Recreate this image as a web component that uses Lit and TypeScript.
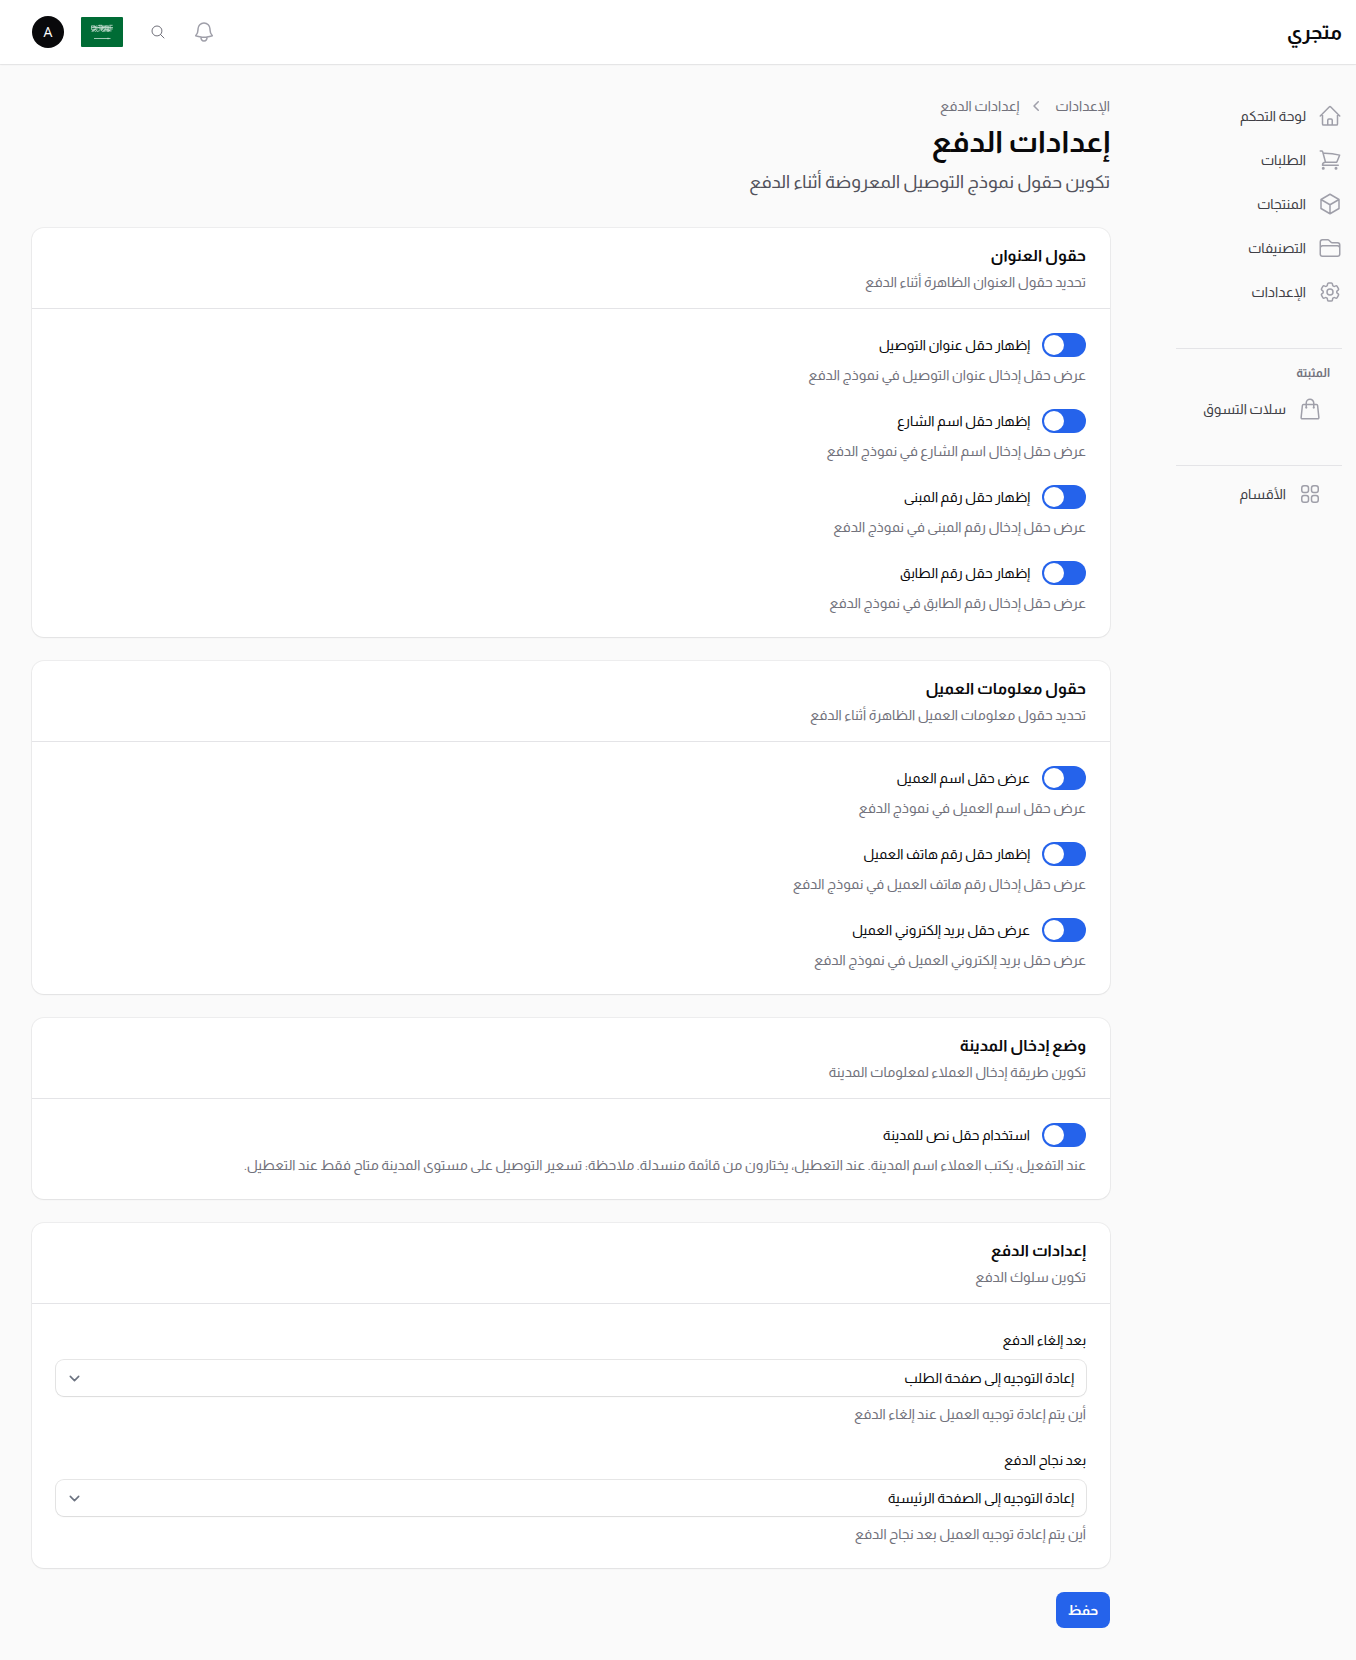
import { LitElement, html, css, svg } from "lit";
import { customElement, property } from "lit/decorators.js";

const ICONS: Record<string, string[]> = {
  home: [
    "m2.25 12 8.954-8.955c.44-.439 1.152-.439 1.591 0L21.75 12M4.5 9.75v10.125c0 .621.504 1.125 1.125 1.125H9.75v-4.875c0-.621.504-1.125 1.125-1.125h2.25c.621 0 1.125.504 1.125 1.125V21h4.125c.621 0 1.125-.504 1.125-1.125V9.75M8.25 21h8.25",
  ],
  cart: [
    "M2.25 3h1.386c.51 0 .955.343 1.087.835l.383 1.437M7.5 14.25a3 3 0 0 0-3 3h15.75m-12.75-3h11.218c1.121-2.3 2.1-4.684 2.924-7.138a60.114 60.114 0 0 0-16.536-1.84M7.5 14.25 5.106 5.272M6 20.25a.75.75 0 1 1-1.5 0 .75.75 0 0 1 1.5 0Zm12.75 0a.75.75 0 1 1-1.5 0 .75.75 0 0 1 1.5 0Z",
  ],
  cube: ["m21 7.5-9-5.25L3 7.5m18 0-9 5.25m9-5.25v9l-9 5.25M3 7.5l9 5.25M3 7.5v9l9 5.25m0-9v9"],
  folder: [
    "M2.25 12.75V12A2.25 2.25 0 0 1 4.5 9.75h15A2.25 2.25 0 0 1 21.75 12v.75m-8.69-6.44-2.12-2.12a1.5 1.5 0 0 0-1.061-.44H4.5A2.25 2.25 0 0 0 2.25 6v12a2.25 2.25 0 0 0 2.25 2.25h15A2.25 2.25 0 0 0 21.75 18V9a2.25 2.25 0 0 0-2.25-2.25h-5.379a1.5 1.5 0 0 1-1.06-.44Z",
  ],
  cog: [
    "M9.594 3.94c.09-.542.56-.94 1.11-.94h2.593c.55 0 1.02.398 1.11.94l.213 1.281c.063.374.313.686.645.87.074.04.147.083.22.127.325.196.72.257 1.075.124l1.217-.456a1.125 1.125 0 0 1 1.37.49l1.296 2.247a1.125 1.125 0 0 1-.26 1.431l-1.003.827c-.293.241-.438.613-.43.992a7.723 7.723 0 0 1 0 .255c-.008.378.137.75.43.991l1.004.827c.424.35.534.955.26 1.43l-1.298 2.247a1.125 1.125 0 0 1-1.369.491l-1.217-.456c-.355-.133-.75-.072-1.076.124a6.47 6.47 0 0 1-.22.128c-.331.183-.581.495-.644.869l-.213 1.281c-.09.543-.56.94-1.11.94h-2.594c-.55 0-1.019-.398-1.11-.94l-.213-1.281c-.062-.374-.312-.686-.644-.87a6.52 6.52 0 0 1-.22-.127c-.325-.196-.72-.257-1.076-.124l-1.217.456a1.125 1.125 0 0 1-1.369-.49l-1.297-2.247a1.125 1.125 0 0 1 .26-1.431l1.004-.827c.292-.24.437-.613.43-.991a6.932 6.932 0 0 1 0-.255c.007-.38-.138-.751-.43-.992l-1.004-.827a1.125 1.125 0 0 1-.26-1.43l1.297-2.247a1.125 1.125 0 0 1 1.37-.491l1.216.456c.356.133.751.072 1.076-.124.072-.044.146-.086.22-.128.332-.183.582-.495.644-.869l.214-1.28Z",
    "M15 12a3 3 0 1 1-6 0 3 3 0 0 1 6 0Z",
  ],
  bag: [
    "M15.75 10.5V6a3.75 3.75 0 1 0-7.5 0v4.5m11.356-1.993 1.263 12c.07.665-.45 1.243-1.119 1.243H4.25a1.125 1.125 0 0 1-1.12-1.243l1.264-12A1.125 1.125 0 0 1 5.513 7.5h12.974c.576 0 1.059.435 1.119 1.007ZM8.625 10.5a.375.375 0 1 1-.75 0 .375.375 0 0 1 .75 0Zm7.5 0a.375.375 0 1 1-.75 0 .375.375 0 0 1 .75 0Z",
  ],
  grid: [
    "M3.75 6A2.25 2.25 0 0 1 6 3.75h2.25A2.25 2.25 0 0 1 10.5 6v2.25a2.25 2.25 0 0 1-2.25 2.25H6a2.25 2.25 0 0 1-2.25-2.25V6ZM3.75 15.75A2.25 2.25 0 0 1 6 13.5h2.25a2.25 2.25 0 0 1 2.25 2.25V18a2.25 2.25 0 0 1-2.25 2.25H6A2.25 2.25 0 0 1 3.75 18v-2.25ZM13.5 6a2.25 2.25 0 0 1 2.25-2.25H18A2.25 2.25 0 0 1 20.25 6v2.25A2.25 2.25 0 0 1 18 10.5h-2.25a2.25 2.25 0 0 1-2.25-2.25V6ZM13.5 15.75a2.25 2.25 0 0 1 2.25-2.25H18a2.25 2.25 0 0 1 2.25 2.25V18A2.25 2.25 0 0 1 18 20.25h-2.25A2.25 2.25 0 0 1 13.5 18v-2.25Z",
  ],
  bell: [
    "M14.857 17.082a23.848 23.848 0 0 0 5.454-1.31A8.967 8.967 0 0 1 18 9.75V9A6 6 0 0 0 6 9v.75a8.967 8.967 0 0 1-2.312 6.022c1.733.64 3.56 1.085 5.455 1.31m5.714 0a24.255 24.255 0 0 1-5.714 0m5.714 0a3 3 0 1 1-5.714 0",
  ],
  search: ["m21 21-5.197-5.197m0 0A7.5 7.5 0 1 0 5.196 5.196a7.5 7.5 0 0 0 10.607 10.607Z"],
};

@customElement("ui-icon")
class UiIcon extends LitElement {
  @property() name = "home";
  static styles = css`
    :host { display: block; flex: none; width: 24px; height: 24px; }
    svg { display: block; width: 100%; height: 100%; }
  `;
  render() {
    return html`<svg viewBox="0 0 24 24" fill="none" stroke="currentColor" stroke-width="1.5" stroke-linecap="round" stroke-linejoin="round">
      ${(ICONS[this.name] ?? []).map((d) => svg`<path d=${d}></path>`)}
    </svg>`;
  }
}

@customElement("settings-card")
class SettingsCard extends LitElement {
  @property() heading = "";
  @property() description = "";
  static styles = css`
    :host {
      display: block;
      background: #fff;
      border-radius: 12px;
      box-shadow: 0 0 0 1px rgba(9, 9, 11, 0.05), 0 1px 2px 0 rgba(0, 0, 0, 0.05);
    }
    .head { display: flex; flex-direction: column; gap: 4px; padding: 16px 24px; }
    .title { margin: 0; font-size: 16px; line-height: 24px; font-weight: 700; color: #09090b; }
    .desc { margin: 0; font-size: 14px; line-height: 20px; color: #71717b; }
    .body { display: flex; flex-direction: column; gap: 24px; padding: 24px; border-top: 1px solid #e4e4e7; }
  `;
  render() {
    return html`
      <header class="head">
        <h3 class="title">${this.heading}</h3>
        <p class="desc">${this.description}</p>
      </header>
      <div class="body"><slot></slot></div>
    `;
  }
}

@customElement("toggle-field")
class ToggleField extends LitElement {
  @property() label = "";
  @property() hint = "";
  static styles = css`
    :host { display: flex; flex-direction: column; gap: 8px; font-size: 14px; }
    .row { display: flex; align-items: center; gap: 12px; height: 24px; color: #09090b; }
    .track {
      display: flex; justify-content: flex-end; box-sizing: border-box;
      width: 44px; height: 24px; padding: 2px; border: 0; border-radius: 12px; background: #2563eb;
    }
    .knob { width: 20px; height: 20px; border-radius: 50%; background: #fff; }
    .hint { margin: 0; line-height: 20px; color: #71717b; }
  `;
  render() {
    return html`
      <div class="row">
        <button class="track" role="switch" aria-checked="true"><span class="knob"></span></button>
        <span>${this.label}</span>
      </div>
      <p class="hint">${this.hint}</p>
    `;
  }
}

@customElement("select-field")
class SelectField extends LitElement {
  @property() label = "";
  @property() value = "";
  @property() hint = "";
  static styles = css`
    :host { display: flex; flex-direction: column; gap: 8px; font-size: 14px; }
    .label { line-height: 24px; color: #09090b; }
    .box {
      display: flex; align-items: center; justify-content: space-between; box-sizing: border-box;
      height: 36px; padding: 0 12px 0 8px; border-radius: 8px; background: #fff; color: #09090b;
      box-shadow: 0 0 0 1px rgba(9, 9, 11, 0.1), 0 1px 2px 0 rgba(0, 0, 0, 0.05);
    }
    .chevron { width: 21px; height: 21px; }
    .hint { margin: 0; line-height: 20px; color: #71717b; }
  `;
  render() {
    return html`
      <span class="label">${this.label}</span>
      <div class="box">
        <span>${this.value}</span>
        <svg class="chevron" viewBox="0 0 20 20" fill="none" stroke="#6b7280" stroke-width="1.5" stroke-linecap="round" stroke-linejoin="round"><path d="m6 8 4 4 4-4"></path></svg>
      </div>
      <p class="hint">${this.hint}</p>
    `;
  }
}

const NAV = [
  ["home", "لوحة التحكم"],
  ["cart", "الطلبات"],
  ["cube", "المنتجات"],
  ["folder", "التصنيفات"],
  ["cog", "الإعدادات"],
];

const ADDRESS = [
  ["إظهار حقل عنوان التوصيل", "عرض حقل إدخال عنوان التوصيل في نموذج الدفع"],
  ["إظهار حقل اسم الشارع", "عرض حقل إدخال اسم الشارع في نموذج الدفع"],
  ["إظهار حقل رقم المبنى", "عرض حقل إدخال رقم المبنى في نموذج الدفع"],
  ["إظهار حقل رقم الطابق", "عرض حقل إدخال رقم الطابق في نموذج الدفع"],
];

const CUSTOMER = [
  ["عرض حقل اسم العميل", "عرض حقل اسم العميل في نموذج الدفع"],
  ["إظهار حقل رقم هاتف العميل", "عرض حقل إدخال رقم هاتف العميل في نموذج الدفع"],
  ["عرض حقل بريد إلكتروني العميل", "عرض حقل بريد إلكتروني العميل في نموذج الدفع"],
];

const CITY = [
  [
    "استخدام حقل نص للمدينة",
    "عند التفعيل، يكتب العملاء اسم المدينة. عند التعطيل، يختارون من قائمة منسدلة. ملاحظة: تسعير التوصيل على مستوى المدينة متاح فقط عند التعطيل.",
  ],
];

@customElement("app-root")
class AppRoot extends LitElement {
  static styles = css`
    :host {
      display: flex; flex-direction: column; box-sizing: border-box; min-height: 1660px;
      direction: rtl; background: #fafafa; color: #09090b;
      font-family: Almarai, "Noto Sans Arabic", "Noto Sans", sans-serif;
      font-size: 14px; line-height: 20px;
    }
    .topbar {
      display: flex; align-items: center; justify-content: space-between; box-sizing: border-box;
      height: 64px; padding: 0 14px 0 32px; background: #fff;
      box-shadow: 0 0 0 1px rgba(9, 9, 11, 0.05), 0 1px 2px 0 rgba(0, 0, 0, 0.05);
    }
    .brand { font-size: 20px; line-height: 20px; font-weight: 700; }
    .tools { display: flex; align-items: center; color: #9f9fa9; }
    .search { width: 16px; height: 16px; margin: 0 26px 0 27px; color: #71717b; }
    .flag { display: block; width: 42px; height: 30px; margin-left: 17px; }
    .avatar {
      display: flex; align-items: center; justify-content: center; width: 32px; height: 32px;
      border-radius: 50%; background: #09090b; color: #fff; font: 400 14px/20px "Open Sans", sans-serif;
    }
    .page { display: flex; align-items: flex-start; }
    .side { box-sizing: border-box; width: 180px; margin: 0 14px 0 52px; padding-top: 32px; display: flex; flex-direction: column; flex: none; }
    .list { display: flex; flex-direction: column; gap: 4px; }
    .item { display: flex; align-items: center; gap: 12px; height: 40px; color: #3f3f46; }
    .item ui-icon { color: #9f9fa9; }
    .group { display: flex; flex-direction: column; width: 166px; border-top: 1px solid #e4e4e7; }
    .pinned { margin-top: 36px; padding: 16px 0 35px; box-sizing: border-box; height: 117px; }
    .caption { padding: 0 12px; font-size: 12px; line-height: 16px; font-weight: 700; color: #71717b; }
    .group .item { padding: 0 20px; }
    .pinned .item { margin-top: 8px; }
    .sections { padding-top: 8px; }
    .main { flex: 1; min-width: 0; padding: 32px 0 32px 32px; }
    .crumbs { display: flex; align-items: center; gap: 8px; height: 20px; color: #71717b; }
    .sep { width: 20px; height: 20px; color: #9f9fa9; }
    .title { margin: 8px 0 0; font-size: 30px; line-height: 36px; font-weight: 700; }
    .lead { margin: 8px 0 32px; font-size: 18px; line-height: 28px; color: #52525c; }
    .cards { display: flex; flex-direction: column; gap: 24px; }
    .save {
      display: block; margin-top: 24px; padding: 0; width: 54px; height: 36px; border: 0; border-radius: 8px;
      background: #2563eb; color: #fff; font: 700 14px/20px Almarai, sans-serif;
    }
  `;

  toggles(rows: string[][]) {
    return rows.map(([label, hint]) => html`<toggle-field label=${label} hint=${hint}></toggle-field>`);
  }

  item(icon: string, label: string) {
    return html`<div class="item"><ui-icon name=${icon}></ui-icon><span>${label}</span></div>`;
  }

  render() {
    return html`
      <header class="topbar">
        <span class="brand">متجري</span>
        <div class="tools">
          <ui-icon name="bell"></ui-icon>
          <svg class="search" viewBox="0 0 24 24" fill="none" stroke="currentColor" stroke-width="1.5" stroke-linecap="round" stroke-linejoin="round"><path d=${ICONS.search[0]}></path></svg>
          <svg class="flag" viewBox="0 0 42 30">
            <rect width="42" height="30" rx="1" fill="#006c35"></rect>
            <g fill="none" stroke="#fff" stroke-width=".75" opacity=".85">
              <path d="M10.5 8.5v3.2q0 2 2 1.8t1.8-2V9m-2.6 1.2 2.8-.9m1.4-1v4.2q0 1.6-1.8 2m3-5.8q1.9-.6 1.8.8t-1.9 1.3m3.2-2.7v5.4m1.3-5v3.2q0 1.6-1.7 1.9m3.1-5.3v4.1q2.2.4 2-1.5V8.9m1.3-.3v5.2m-4-3.6 2.5-.6m3-1.2v4.7m1.4-4.3v3.2q0 2-1.9 2M10.6 14.4l3-.6m2.2.7 3-.8m2.1.7 3.2-.7m2.1.6 2.3-.6"></path>
              <path d="M11 8.9h3m3.8-.6h3.4m2.5.6h3m1.7-.6h3.2M11.6 12.4h3.6m2.8-.5h3.8m2.1.5h3.7m1.7-.4h2.4M22 13.9h8.5M11 10.6h21"></path>
            </g>
            <path d="M13 21.5h16.5M27 20.7v1.6" stroke="#fff" stroke-width=".7" opacity=".9"></path>
          </svg>
          <span class="avatar">A</span>
        </div>
      </header>
      <div class="page">
        <nav class="side">
          <div class="list">${NAV.map(([i, l]) => this.item(i, l))}</div>
          <div class="group pinned">
            <span class="caption">المثبتة</span>
            ${this.item("bag", "سلات التسوق")}
          </div>
          <div class="group sections">${this.item("grid", "الأقسام")}</div>
        </nav>
        <main class="main">
          <div class="crumbs">
            <span>الإعدادات</span>
            <svg class="sep" viewBox="0 0 20 20" fill="currentColor"><path d="M11.78 5.22a.75.75 0 0 1 0 1.06L8.06 10l3.72 3.72a.75.75 0 1 1-1.06 1.06l-4.25-4.25a.75.75 0 0 1 0-1.06l4.25-4.25a.75.75 0 0 1 1.06 0Z"></path></svg>
            <span>إعدادات الدفع</span>
          </div>
          <h1 class="title">إعدادات الدفع</h1>
          <p class="lead">تكوين حقول نموذج التوصيل المعروضة أثناء الدفع</p>
          <div class="cards">
            <settings-card heading="حقول العنوان" description="تحديد حقول العنوان الظاهرة أثناء الدفع">${this.toggles(ADDRESS)}</settings-card>
            <settings-card heading="حقول معلومات العميل" description="تحديد حقول معلومات العميل الظاهرة أثناء الدفع">${this.toggles(CUSTOMER)}</settings-card>
            <settings-card heading="وضع إدخال المدينة" description="تكوين طريقة إدخال العملاء لمعلومات المدينة">${this.toggles(CITY)}</settings-card>
            <settings-card heading="إعدادات الدفع" description="تكوين سلوك الدفع">
              <select-field label="بعد إلغاء الدفع" value="إعادة التوجيه إلى صفحة الطلب" hint="أين يتم إعادة توجيه العميل عند إلغاء الدفع"></select-field>
              <select-field label="بعد نجاح الدفع" value="إعادة التوجيه إلى الصفحة الرئيسية" hint="أين يتم إعادة توجيه العميل بعد نجاح الدفع"></select-field>
            </settings-card>
          </div>
          <button class="save">حفظ</button>
        </main>
      </div>
    `;
  }
}
